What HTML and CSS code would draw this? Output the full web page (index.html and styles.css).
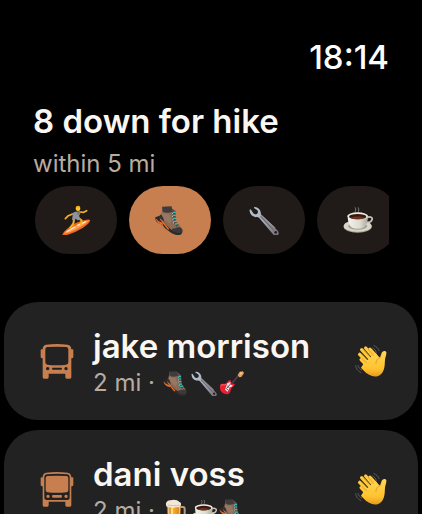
FILE: index.html
```
<!DOCTYPE html>
<html lang="en">

<head>
    <meta charset="utf-8">
    <meta name="viewport" content="width=device-width, initial-scale=1">
    <title>Down for hike</title>
    <link rel="stylesheet" href="styles.css">
</head>

<body>
    <!-- Shared icons -->
    <svg class="sprite" aria-hidden="true">
        <defs>
            <linearGradient id="steel" x1="0" y1="0" x2="1" y2="1">
                <stop offset="0" stop-color="#b9c8d6" />
                <stop offset="0.5" stop-color="#a9a9b4" />
                <stop offset="1" stop-color="#76686c" />
            </linearGradient>
            <linearGradient id="skin" x1="0" y1="0" x2="0" y2="1">
                <stop offset="0" stop-color="#ffd654" />
                <stop offset="0.7" stop-color="#ffc22e" />
                <stop offset="1" stop-color="#e59a1c" />
            </linearGradient>
            <linearGradient id="china" x1="0" y1="0" x2="1" y2="0">
                <stop offset="0" stop-color="#f4f2ea" />
                <stop offset="0.6" stop-color="#dedbd1" />
                <stop offset="1" stop-color="#aaa79e" />
            </linearGradient>
            <linearGradient id="ale" x1="0" y1="0" x2="1" y2="0">
                <stop offset="0" stop-color="#b9640f" />
                <stop offset="0.4" stop-color="#ffb52e" />
                <stop offset="1" stop-color="#d9780f" />
            </linearGradient>
        </defs>

        <symbol id="surf" viewBox="108 75 90 90">
            <path d="M112 164c4-11 24-28 48-38 17-7 33-10 35-6 3 5-12 19-33 30-22 12-46 20-50 14z" fill="#f0671f" />
            <path d="M116 162c10-13 40-31 77-42-8 12-49 37-77 42z" fill="#ff9a50" />
            <path d="M126 155l24-14M158 136l24-11" stroke="#ffe6cf" stroke-width="4" stroke-linecap="round" />
            <path d="M147 119l-2 12-9 12M160 114l10 7-2 11" fill="none" stroke="#f5b21c" stroke-width="6" stroke-linecap="round" stroke-linejoin="round" />
            <path d="M143 102l-13 5-9 9M165 96l11 1 9-5" fill="none" stroke="#f5b21c" stroke-width="5" stroke-linecap="round" stroke-linejoin="round" />
            <path d="M139 102l9-6 17-2 1 7-4 6 5 12-9 2-6-5-4 6-7-3 2-14z" fill="#8f939a" />
            <path d="M158 94l7 1-3 10-6-3z" fill="#70747b" />
            <circle cx="159" cy="86" r="7" fill="#ffc52d" />
            <path d="M152 84c0-8 13-9 14-1-5-2-9-2-14 1z" fill="#e9a70f" />
        </symbol>

        <symbol id="boot" viewBox="105 75 90 90">
            <path d="M106 112l12-5 16 20 20 22 32-2c3 7 1 14-5 17-9 3-20 0-31-8l-15-11-8-11-12-5c-6-4-10-9-9-17z" fill="#2d2a2b" />
            <path d="M107 115l8 8 12 5 3 7-11-4c-6-3-11-9-12-16zM119 117l5 0 10 13 14 17-4 2-14-17z" fill="#f0692c" />
            <path d="M127 82l28 2 12 9 2 30 15 20-12 6-16-1c-10-5-14-11-20-17-8-7-15-13-17-19 5-8 8-18 8-30z" fill="#8b6b55" />
            <path d="M127 98c6 3 13 4 20 3l8 20-6 10c-9-8-20-13-26-20z" fill="#987761" />
            <path d="M126 80l29-1 2 16c-9 4-21 4-29 0z" fill="#403b3c" />
            <path d="M120 104c-3 5-1 9 3 13l9 8-2-10-6-11z" fill="#343031" />
            <path d="M165 145c7-4 16-4 21 1 2 6 0 11-6 13-8 1-19-2-26-8 1-4 5-6 11-6z" fill="#3d393a" />
            <path d="M157 86l9 8 1 29 9 13-7 4-10-14-3-19z" fill="#594842" />
            <path d="M160 97h6M159 106h7M160 115h7M161 124h8M166 132l7-1" stroke="#2fc3bd" stroke-width="4" stroke-linecap="round" />
            <path d="M157 101h2M157 110h2M158 119h2M160 128h2" stroke="#dce8e0" stroke-width="4" />
        </symbol>

        <symbol id="wrench" viewBox="102 75 90 90">
            <path d="M118 81c9-1 17 6 19 14 1 4 0 7 2 11l47 44c6 5 7 12 3 15-4 4-11 3-15-2l-42-50c-4-2-8-1-12-2-10-2-17-11-16-22l3-1 8 12c4 5 14 3 14-5 0-3-3-6-12-11z" fill="url(#steel)" />
            <path d="M138 110l38 40" stroke="#696d79" stroke-width="4" stroke-linecap="round" />
            <path d="M139 105l42 39" stroke="#c9c8d0" stroke-width="2" />
            <circle cx="182" cy="157" r="4" fill="#241e1c" />
        </symbol>

        <symbol id="coffee" viewBox="114 75 90 90">
            <path d="M152 97c-6-6 5-7-1-14M161 97c-4-6 4-8-1-14" fill="none" stroke="#777" stroke-width="3" stroke-linecap="round" />
            <ellipse cx="158" cy="140" rx="42" ry="18" fill="#a9a69b" />
            <ellipse cx="158" cy="138" rx="42" ry="17" fill="#d8d5c9" />
            <ellipse cx="158" cy="139" rx="29" ry="10" fill="#a5a297" />
            <path d="M186 113c9-5 18-1 15 6-2 6-9 9-18 8" fill="none" stroke="#c9c6bc" stroke-width="5" />
            <path d="M128 107c0 19 5 30 14 36 9 4 23 4 32 0 9-6 15-17 15-36z" fill="url(#china)" />
            <ellipse cx="158" cy="108" rx="31" ry="11" fill="#eeece4" />
            <ellipse cx="158" cy="110" rx="26" ry="8" fill="#39190e" />
            <path d="M137 113c11-5 29-5 42 0-10 6-32 6-42 0z" fill="#6b3420" />
        </symbol>

        <symbol id="guitar" viewBox="193 14 78 78">
            <path d="M229 57l25-29" stroke="#4b3c4d" stroke-width="5" />
            <path d="M249 29l6-10 10-1 3 6-8 11-6 1z" fill="#e99b59" />
            <path d="M257 21l7 1-7 8z" fill="#ffd09a" />
            <path d="M197 58c5-6 11 0 17-4 5-4 7-11 13-9 4 1 1 5 2 8 4 5 10 0 11 4 1 6-9 8-11 15-2 8-4 15-12 15-11 0-21-9-21-18 0-5-1-8 1-11z" fill="#e91f32" />
            <path d="M198 60c5-4 11 1 17-3" fill="none" stroke="#ff6573" stroke-width="3" />
            <path d="M218 54l9-4 2 8 6 3-10 6-6 12-8-6z" fill="#eee9ea" />
            <path d="M213 68l8 7M218 62l7 6" stroke="#5d5c66" stroke-width="3" />
            <path d="M217 68l14-16" stroke="#5d4f58" stroke-width="3" />
        </symbol>

        <symbol id="beer" viewBox="27 22 78 78">
            <path d="M78 49h9c4 0 5 3 5 7v20c0 5-3 8-12 9" fill="none" stroke="#b69c84" stroke-width="6" />
            <path d="M38 40h42l-2 51c-7 6-30 6-37 0z" fill="url(#ale)" />
            <path d="M44 49v38M77 49l-1 38" stroke="#e8c188" stroke-width="4" />
            <path d="M54 53v34" stroke="#ffe07c" stroke-width="6" />
            <path d="M36 42c-1-9 7-13 14-13 9-4 21-1 26 5 6 1 7 8 3 13-4 5-12 1-18 4-8 3-13-3-19-2-4-1-6-3-6-7z" fill="#f3e7d7" />
            <path d="M41 44c11-1 24 4 36-1" fill="none" stroke="#d7bfa4" stroke-width="3" />
        </symbol>

        <symbol id="wave" viewBox="30 29 96 96">
            <path d="M87 31c8 3 13 8 15 15M83 38c6 3 9 7 11 13M32 91c1 9 7 17 16 21M39 90c1 6 5 11 11 14" fill="none" stroke="#5a5a5c" stroke-width="3" stroke-linecap="round" />
            <path d="M66 80L44 57M74 69L50 43M83 62L62 38M92 60L75 42" stroke="#ffcb3c" stroke-width="10" stroke-linecap="round" />
            <path d="M66 92L48 73" stroke="#ffcb3c" stroke-width="9" stroke-linecap="round" />
            <path d="M57 83l34-29 14 13 5-14c3-7 12-8 14-2 1 5-3 14-4 23-1 10 0 21-5 32-6 15-22 21-36 15-11-4-22-13-31-24z" fill="url(#skin)" />
            <path d="M52 70l12 12M50 56l16 17M57 46l19 20M70 42l15 18" stroke="#d58c17" stroke-width="2" stroke-linecap="round" />
            <path d="M105 67c-8 2-12 9-12 17" fill="none" stroke="#dda022" stroke-width="3" stroke-linecap="round" />
        </symbol>

        <symbol id="bus" viewBox="32 30 102 105">
            <path fill="currentColor" fill-rule="evenodd" d="M50 32q32-4 65 0 11 2 11 14h3q3 0 3 3v20q0 4-6 4v57q0 4-4 4h-10q-4 0-4-4v-11H58v11q0 4-4 4h-10q-4 0-4-4V73q-6 0-6-4V49q0-3 3-3h3q0-12 10-14zM54 39q28-2 57 0 6 1 6 7v39q0 6-6 7-29 3-57 0-6-1-6-7V46q0-6 6-7zM55 99a5 5 0 1 0 .1 0zM110 99a5 5 0 1 0 .1 0zM71 101h24q3 0 3 3t-3 3H71q-3 0-3-3t3-3z" />
        </symbol>

        <symbol id="bus-fill" viewBox="32 30 102 105">
            <path fill="currentColor" fill-rule="evenodd" d="M50 32q32-4 65 0 11 2 11 14h3q3 0 3 3v20q0 4-6 4v57q0 4-4 4h-10q-4 0-4-4v-11H58v11q0 4-4 4h-10q-4 0-4-4V73q-6 0-6-4V49q0-3 3-3h3q0-12 10-14zM52 37q31-3 62 0 7 1 7 8v61q0 8-7 8H52q-7 0-7-8V45q0-7 7-8z" />
            <path fill="currentColor" d="M54 42q29-2 58 0 5 1 5 6v36q0 6-5 7-29 3-58 0-5-1-5-7V48q0-5 5-6z" />
            <path fill="currentColor" d="M56 98a5 5 0 1 0 .1 0zM110 98a5 5 0 1 0 .1 0zM71 99h24q3 0 3 4t-3 4H71q-3 0-3-4t3-4z" />
        </symbol>
    </svg>

    <header class="header">
        <time class="clock" datetime="18:14">18:14</time>
        <h1 class="title">8 down for hike</h1>
        <p class="subtitle">within 5 mi</p>
        <div class="chips">
            <button class="chip" type="button" aria-label="Surf"><svg><use href="#surf" /></svg></button>
            <button class="chip chip-active" type="button" aria-label="Hike" aria-pressed="true"><svg><use href="#boot" /></svg></button>
            <button class="chip" type="button" aria-label="Repairs"><svg><use href="#wrench" /></svg></button>
            <button class="chip" type="button" aria-label="Coffee"><svg><use href="#coffee" /></svg></button>
        </div>
    </header>

    <main class="people">
        <article class="card">
            <svg class="bus" aria-hidden="true"><use href="#bus" /></svg>
            <div class="info">
                <h2 class="name">jake morrison</h2>
                <p class="details">
                    <span>2 mi ·</span>
                    <span class="likes">
                        <svg><use href="#boot" /></svg>
                        <svg><use href="#wrench" /></svg>
                        <svg><use href="#guitar" /></svg>
                    </span>
                </p>
            </div>
            <button class="wave" type="button" aria-label="Wave to jake morrison"><svg><use href="#wave" /></svg></button>
        </article>

        <article class="card">
            <svg class="bus" aria-hidden="true"><use href="#bus-fill" /></svg>
            <div class="info">
                <h2 class="name">dani voss</h2>
                <p class="details">
                    <span>2 mi ·</span>
                    <span class="likes">
                        <svg><use href="#beer" /></svg>
                        <svg><use href="#coffee" /></svg>
                        <svg><use href="#boot" /></svg>
                    </span>
                </p>
            </div>
            <button class="wave" type="button" aria-label="Wave to dani voss"><svg><use href="#wave" /></svg></button>
        </article>
    </main>
</body>

</html>
```
FILE: styles.css
```
html {
    scrollbar-width: none;
}

body {
    margin: 0;
    background-color: #000000;
    color: #faf6f2;
    font-family: Inter, "Liberation Sans", sans-serif;
}

h1, h2, p {
    margin: 0;
}

button {
    padding: 0;
    border: none;
    background: none;
    cursor: pointer;
}

svg {
    display: block;
}

.sprite {
    position: absolute;
    width: 0;
    height: 0;
}

/* Clock, title and activity filter */
.header {
    display: flex;
    flex-direction: column;
    padding: 37px 33px 0;
}

.clock {
    align-self: flex-end;
    color: #ffffff;
    font-size: 33px;
    font-weight: 500;
    line-height: 40px;
}

.title {
    margin-top: 24px;
    font-size: 33px;
    font-weight: 600;
    line-height: 40px;
}

.subtitle {
    margin-top: 7px;
    color: #b8aca0;
    font-size: 24px;
    line-height: 32px;
}

.chips {
    display: flex;
    gap: 12px;
    margin-top: 6px;
    padding-left: 2px;
    overflow-x: auto;
    scrollbar-width: none;
}

.chip {
    flex: none;
    display: flex;
    justify-content: center;
    align-items: center;
    width: 82px;
    height: 68px;
    border-radius: 34px;
    background-color: #201b18;
}

.chip-active {
    background-color: #c77f50;
}

.chip svg {
    width: 30px;
    height: 30px;
}

/* List of people nearby */
.people {
    display: flex;
    flex-direction: column;
    gap: 10px;
    margin-top: 48px;
    padding: 0 4px 4px;
}

.card {
    display: flex;
    align-items: center;
    box-sizing: border-box;
    min-height: 118px;
    padding: 0 31px 0 36px;
    border-radius: 34px;
    background-color: #222222;
}

.bus {
    flex: none;
    width: 34px;
    height: 35px;
    color: #c77f50;
}

.info {
    flex: 1;
    margin-left: 19px;
    padding-top: 3px;
}

.name {
    font-size: 33px;
    font-weight: 600;
    line-height: 40px;
}

.details {
    display: flex;
    align-items: center;
    gap: 8px;
    margin-top: 1px;
    color: #b8aca0;
    font-size: 24px;
    line-height: 32px;
}

.likes {
    display: flex;
    gap: 2px;
}

.likes svg {
    width: 26px;
    height: 26px;
}

.wave svg {
    width: 32px;
    height: 32px;
}
```
